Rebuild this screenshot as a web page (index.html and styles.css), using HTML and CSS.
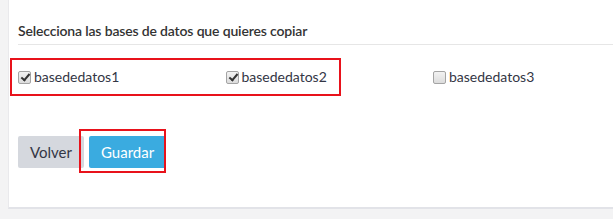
FILE: index.html
```html
<!DOCTYPE html>
<html lang="es">
<head>
<meta charset="utf-8">
<title>Copiar bases de datos</title>
<link rel="stylesheet" href="styles.css">
</head>
<body>
<div class="panel">
  <div class="panel-body">
    <h4 class="title">Selecciona las bases de datos que quieres copiar</h4>
    <div class="db-list">
      <label class="db-item"><span class="cb checked"></span>basededatos1</label>
      <label class="db-item"><span class="cb checked"></span>basededatos2</label>
      <label class="db-item"><span class="cb"></span>basededatos3</label>
      <div class="mark mark-list"></div>
    </div>
    <div class="actions">
      <button class="btn btn-default">Volver</button>
      <button class="btn btn-primary">Guardar</button>
      <div class="mark mark-save"></div>
    </div>
  </div>
</div>
</body>
</html>
```
FILE: styles.css
```css
html, body {
  margin: 0;
  padding: 0;
}
body {
  background: #f3f3f4;
  font-family: Lato, "Open Sans", "Liberation Sans", sans-serif;
  color: #333;
  height: 219px;
  overflow: hidden;
}
.panel {
  margin-left: 8px;
  background: #fff;
  border-left: 1px solid #e9e9ec;
  border-bottom: 2px solid #e2e3e8;
  height: 209px;
  box-sizing: border-box;
}
.panel-body {
  padding: 21px 0 0 9px;
}
.title {
  margin: 0;
  font-size: 14px;
  font-weight: 600;
  letter-spacing: -0.16px;
  line-height: 20px;
  color: #333;
  padding-bottom: 3px;
  border-bottom: 1px solid #e6e6e6;
}
.db-list {
  position: relative;
  display: grid;
  grid-template-columns: 207.5px 207.5px 207.5px;
  padding: 22px 0 0;
  height: 28px;
}
.db-item {
  display: flex;
  align-items: center;
  gap: 3px;
  font-size: 14px;
  line-height: 20px;
  height: 20px;
  color: #333645;
}
.cb {
  width: 11px;
  height: 11px;
  border: 1px solid #a4a4a4;
  border-radius: 2px;
  background: linear-gradient(#f2f2f2, #dcdcdc);
  position: relative;
  box-sizing: content-box;
  flex: none;
}
.cb.checked::after {
  content: "";
  position: absolute;
  left: 4px;
  top: 0px;
  width: 3px;
  height: 7px;
  border: solid #333;
  border-width: 0 2px 2px 0;
  transform: rotate(40deg);
}
.mark {
  position: absolute;
  border: 2px solid #e8121b;
  box-sizing: border-box;
  pointer-events: none;
}
.mark-list {
  left: -8px;
  top: 13px;
  width: 331px;
  height: 38px;
}
.actions {
  position: relative;
  display: flex;
  gap: 5px;
  margin-top: 41px;
}
.btn {
  font-family: Lato, "Open Sans", "Liberation Sans", sans-serif;
  font-size: 15px;
  height: 32px;
  padding: 0 12px;
  border: none;
  border-radius: 2px;
  cursor: pointer;
}
.btn-default {
  background: #d5d8de;
  color: #333645;
}
.btn-primary {
  background: #3aabe0;
  color: #fff;
}
.mark-save {
  left: 61px;
  top: -7px;
  width: 87px;
  height: 44px;
}
```
